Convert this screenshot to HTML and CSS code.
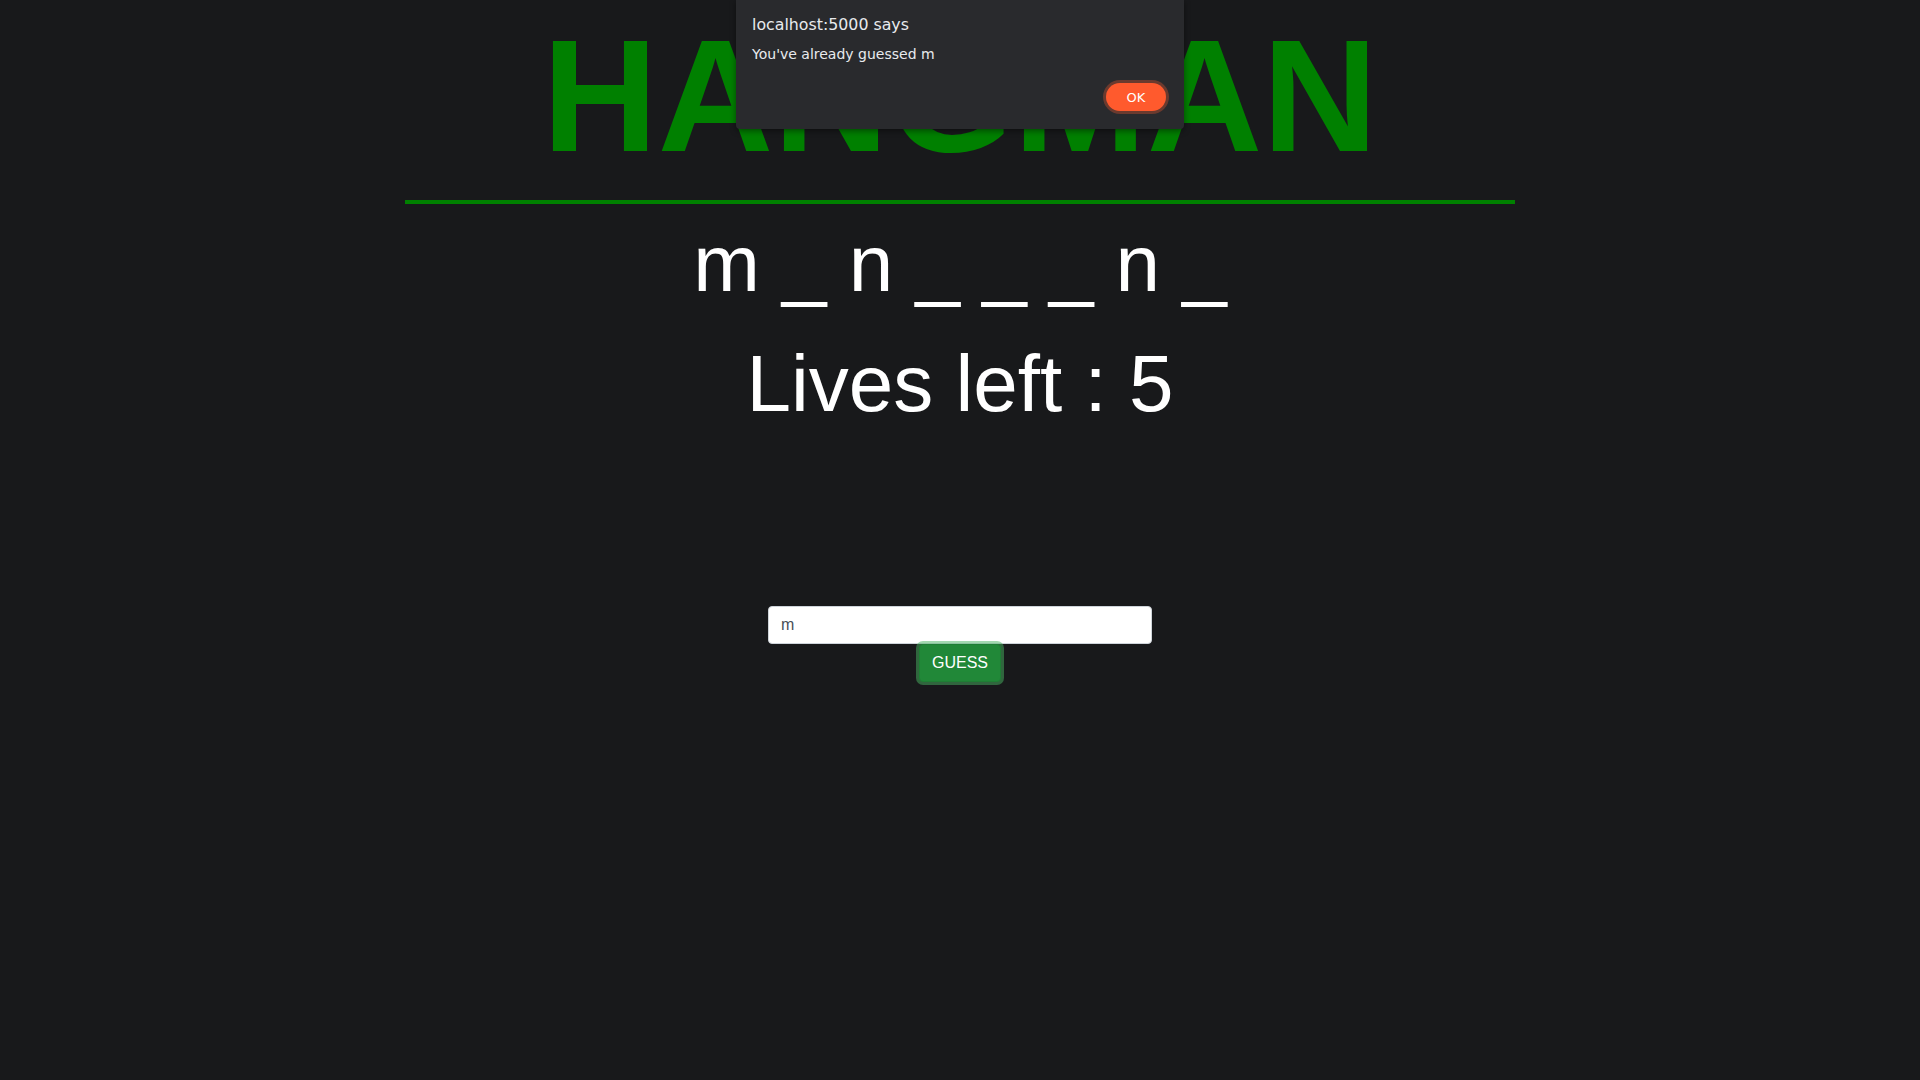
FILE: index.html
```html
<!DOCTYPE html>
<html lang="en">
<head>
<meta charset="utf-8">
<title>Hangman</title>
<link rel="stylesheet" href="styles.css">
</head>
<body>
<div class="container">
  <h1 class="title">HANGMAN</h1>
  <hr class="divider">
  <div class="word">m _ n _ _ _ n _</div>
  <div class="lives">Lives left : 5</div>
  <form class="guess-form" onsubmit="return false;">
    <input class="guess-input" type="text" value="m">
    <button class="guess-btn" type="submit">GUESS</button>
  </form>
</div>

<div class="dialog">
  <div class="dialog-title">localhost:5000 says</div>
  <div class="dialog-msg">You've already guessed m</div>
  <div class="dialog-actions">
    <button class="dialog-ok" type="button">OK</button>
  </div>
</div>
</body>
</html>
```

FILE: styles.css
```css
html, body {
  margin: 0;
  padding: 0;
}

body {
  background: #18191b;
  color: #ffffff;
  font-family: "Liberation Sans", Arial, sans-serif;
  font-size: 16px;
  line-height: 1.5;
  min-height: 1080px;
  position: relative;
}

.container {
  max-width: 1110px;
  margin: 0 auto;
  padding: 0 15px;
  text-align: center;
}

.title {
  margin: 0 0 8px;
  font-size: 160px;
  font-weight: 700;
  line-height: 1.2;
  color: #008000;
}

.divider {
  margin: 0;
  border: 0;
  border-top: 4px solid #008000;
  height: 0;
}

.word,
.lives {
  font-size: 80px;
  line-height: 1.5;
  color: #ffffff;
}

.guess-form {
  margin-top: 162px;
  display: flex;
  flex-direction: column;
  align-items: center;
}

.guess-input {
  box-sizing: border-box;
  width: 384px;
  height: 38px;
  padding: 6px 12px;
  border: 1px solid #ced4da;
  border-radius: 4px;
  background: #ffffff;
  color: #495057;
  font-family: "Liberation Sans", Arial, sans-serif;
  font-size: 16px;
  line-height: 1.5;
  outline: none;
}

.guess-btn {
  box-sizing: border-box;
  height: 38px;
  padding: 6px 12px;
  border: 1px solid #1e7e34;
  border-radius: 4px;
  background: #218838;
  color: #ffffff;
  font-family: "Liberation Sans", Arial, sans-serif;
  font-size: 16px;
  line-height: 1.5;
  box-shadow: 0 0 0 3px rgba(72, 180, 97, 0.5);
  cursor: pointer;
}

.dialog {
  position: absolute;
  top: 0;
  left: 736px;
  width: 448px;
  height: 129px;
  box-sizing: border-box;
  padding: 13px 16px 0;
  background: #292a2d;
  border-radius: 0 0 4px 4px;
  box-shadow: 0 2px 6px rgba(0, 0, 0, 0.45);
  font-family: "DejaVu Sans", sans-serif;
  color: #e8eaed;
  text-align: left;
}

.dialog-title {
  font-size: 15.8px;
  line-height: 24px;
}

.dialog-msg {
  margin-top: 7px;
  font-size: 14px;
  line-height: 20px;
}

.dialog-actions {
  display: flex;
  justify-content: flex-end;
  margin-top: 19px;
  padding-right: 2px;
}

.dialog-ok {
  width: 60px;
  height: 28px;
  padding: 0;
  border: 0;
  border-radius: 14px;
  background: #ff5a2d;
  color: #ffffff;
  font-family: "DejaVu Sans", sans-serif;
  font-size: 13px;
  box-shadow: 0 0 0 3px #6b3a2e;
}
```
